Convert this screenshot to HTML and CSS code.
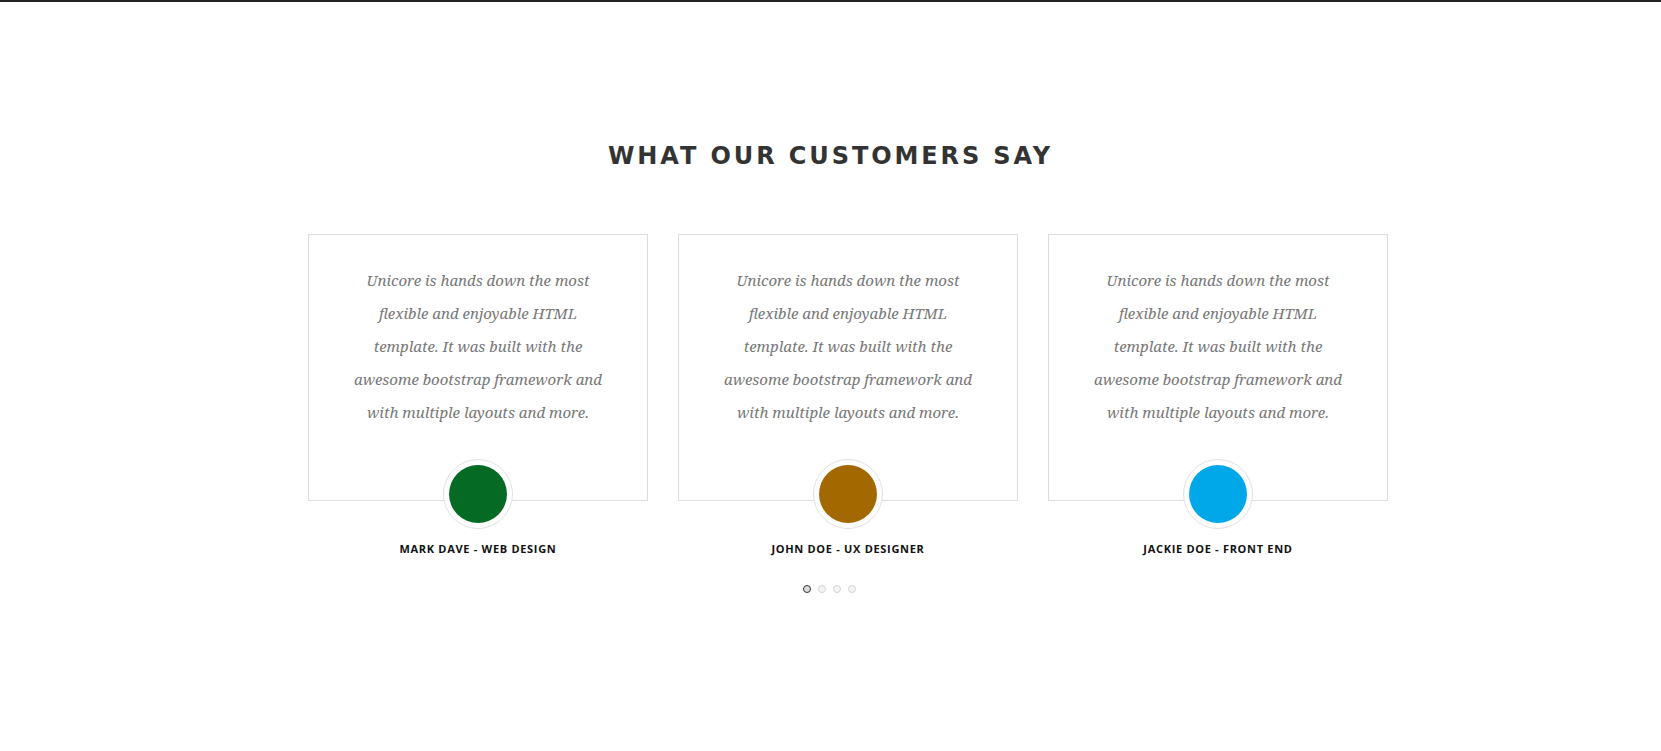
FILE: index.html
```html
<!DOCTYPE html>
<html lang="en">
<head>
<meta charset="utf-8">
<title>What our customers say</title>
<link rel="stylesheet" href="styles.css">
</head>
<body>
<div class="topbar"></div>
<section class="testimonials">
  <h2 class="title">WHAT OUR CUSTOMERS SAY</h2>
  <div class="cards">
    <div class="item">
      <div class="card">
        <p class="quote">Unicore is hands down the most flexible and enjoyable HTML template. It was built with the awesome bootstrap framework and with multiple layouts and more.</p>
        <div class="avatar"><span class="pic green"></span></div>
      </div>
      <div class="name">MARK DAVE - WEB DESIGN</div>
    </div>
    <div class="item">
      <div class="card">
        <p class="quote">Unicore is hands down the most flexible and enjoyable HTML template. It was built with the awesome bootstrap framework and with multiple layouts and more.</p>
        <div class="avatar"><span class="pic brown"></span></div>
      </div>
      <div class="name">JOHN DOE - UX DESIGNER</div>
    </div>
    <div class="item">
      <div class="card">
        <p class="quote">Unicore is hands down the most flexible and enjoyable HTML template. It was built with the awesome bootstrap framework and with multiple layouts and more.</p>
        <div class="avatar"><span class="pic blue"></span></div>
      </div>
      <div class="name">JACKIE DOE - FRONT END</div>
    </div>
  </div>
  <div class="dots">
    <span class="dot active"></span>
    <span class="dot"></span>
    <span class="dot"></span>
    <span class="dot"></span>
  </div>
</section>
</body>
</html>
```

FILE: styles.css
```css
html, body {
  margin: 0;
  padding: 0;
  background: #fff;
}
body {
  font-family: "Open Sans", "Liberation Sans", sans-serif;
}
.topbar {
  height: 2px;
  background: #222;
}
.testimonials {
  padding-top: 132px;
  height: 617px;
}
.title {
  margin: 0;
  text-align: center;
  font-family: "DejaVu Sans", sans-serif;
  font-weight: bold;
  font-size: 24px;
  line-height: 44px;
  letter-spacing: 2.9px;
  color: #333;
}
.cards {
  display: flex;
  gap: 30px;
  width: 1080px;
  margin-top: 56px;
  margin-left: calc(50% - 522.5px);
}
.item {
  width: 340px;
  display: flex;
  flex-direction: column;
  align-items: center;
}
.card {
  box-sizing: border-box;
  width: 340px;
  border: 1px solid #ddd;
  padding: 29px 44px 0;
  display: flex;
  flex-direction: column;
  align-items: center;
}
.quote {
  margin: 0;
  text-align: center;
  font-family: "Noto Serif", "DejaVu Serif", serif;
  font-style: italic;
  font-size: 15px;
  line-height: 33px;
  color: #777;
}
.avatar {
  box-sizing: border-box;
  width: 70px;
  height: 70px;
  margin-top: 30px;
  margin-bottom: -29px;
  border: 1px solid #e2e2e2;
  border-radius: 50%;
  background: #fff;
  padding: 5px;
}
.pic {
  display: block;
  width: 58px;
  height: 58px;
  border-radius: 50%;
}
.green { background: #056a24; }
.brown { background: #a36900; }
.blue { background: #00a7e9; }
.name {
  margin-top: 40px;
  font-family: "Open Sans", sans-serif;
  font-weight: bold;
  font-size: 11px;
  line-height: 16px;
  letter-spacing: 0.7px;
  color: #111;
}
.dots {
  display: flex;
  justify-content: center;
  gap: 7px;
  margin-top: 28px;
  margin-right: 2px;
}
.dot {
  box-sizing: border-box;
  width: 8px;
  height: 8px;
  border-radius: 50%;
  border: 1px solid #d6d6d6;
  background: #f4f4f4;
}
.dot.active {
  border-color: #333;
  background: #ddd;
}
```
